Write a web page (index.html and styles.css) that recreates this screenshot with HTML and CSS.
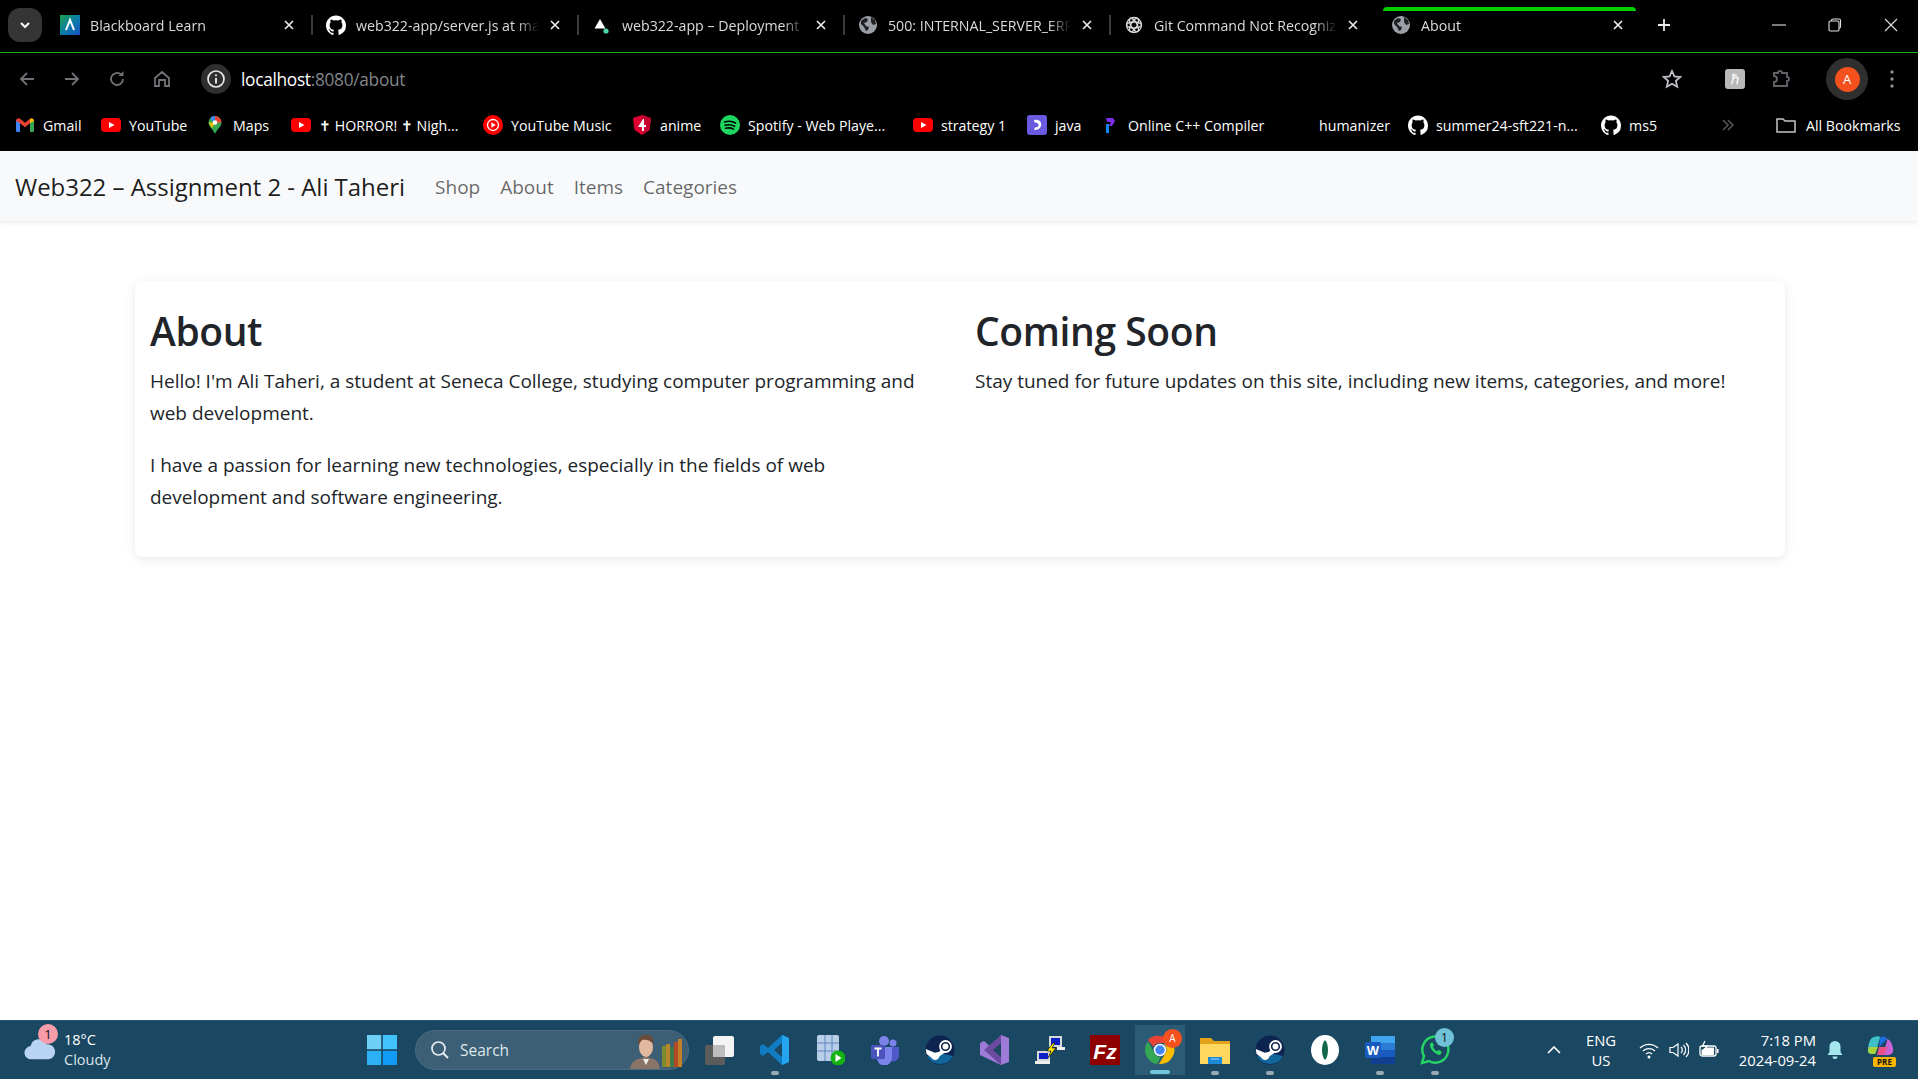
FILE: index.html
```html
<!DOCTYPE html>
<html lang="en">
<head>
<meta charset="utf-8">
<title>About</title>
<link rel="stylesheet" href="styles.css">
</head>
<body>
<svg class="defs" width="0" height="0">
  <symbol id="gh" viewBox="0 0 24 24"><path fill="#fff" d="M12 .5C5.37.5 0 5.87 0 12.5c0 5.3 3.44 9.8 8.2 11.39.6.11.82-.26.82-.58v-2.03c-3.34.73-4.04-1.61-4.04-1.61-.55-1.39-1.34-1.76-1.34-1.76-1.09-.75.08-.73.08-.73 1.2.08 1.84 1.24 1.84 1.24 1.07 1.83 2.81 1.3 3.5 1 .11-.78.42-1.3.76-1.6-2.67-.3-5.47-1.33-5.47-5.93 0-1.31.47-2.38 1.24-3.22-.13-.3-.54-1.52.12-3.18 0 0 1.01-.32 3.3 1.23a11.5 11.5 0 0 1 6 0c2.29-1.55 3.3-1.23 3.3-1.23.66 1.66.25 2.88.12 3.18.77.84 1.24 1.91 1.24 3.22 0 4.61-2.81 5.62-5.48 5.92.43.37.81 1.1.81 2.22v3.29c0 .32.22.69.83.58A12 12 0 0 0 24 12.5C24 5.87 18.63.5 12 .5z"/></symbol>
  <symbol id="yt" viewBox="0 0 20 20"><rect x="0" y="3" width="20" height="14" rx="4" fill="#f00"/><path d="M8 7l5.5 3L8 13z" fill="#fff"/></symbol>
  <symbol id="globe" viewBox="0 0 20 20"><circle cx="10" cy="10" r="9" fill="#9aa0a6"/><path d="M3 6l4-3 3 1-1 3-3 1 2 3 3 1-1 3-2 1-2-4-3-3zM13 2l4 3 1 4-3 1-2-3z" fill="#202124"/></symbol>
  <symbol id="x" viewBox="0 0 12 12"><path d="M2 2l8 8M10 2l-8 8" stroke="#e8eaed" stroke-width="1.7" fill="none"/></symbol>
  <symbol id="steam" viewBox="0 0 30 30">
    <circle cx="15" cy="15" r="14.500" fill="#0d2350"/>
    <path d="M2 21a14.500 14.500 0 0 0 26 0L15 18z" fill="#11679b"/>
    <path d="M.8 14l9 3.800 4.500-1 3-4.500 3 5-5.800 4a4.500 4.500 0 0 1-8.500 1L1.500 19z" fill="#fff"/>
    <circle cx="20.500" cy="11.500" r="5.500" fill="#0d2350" stroke="#fff" stroke-width="1.800"/>
    <circle cx="20.500" cy="11.500" r="3" fill="#fff"/>
  </symbol>
</svg>

<header class="chrome">
  <div class="tabstrip">
    <button class="tab-search"><svg width="12" height="12" viewBox="0 0 12 12"><path d="M2 4l4 4 4-4" fill="none" stroke="#fff" stroke-width="2"/></svg></button>
    <div class="tab">
      <svg class="fav" viewBox="0 0 20 20"><defs><linearGradient id="bb" x1="0" y1="0" x2="1" y2="1"><stop offset="0" stop-color="#1fa045"/><stop offset=".5" stop-color="#0a7ea8"/><stop offset="1" stop-color="#1a4fc4"/></linearGradient></defs><rect width="20" height="20" fill="url(#bb)"/><path d="M6 15l4-10 4 10" fill="none" stroke="#fff" stroke-width="2"/></svg>
      <span class="tab-title">Blackboard Learn</span>
      <svg class="close"><use href="#x"/></svg>
    </div>
    <div class="tab">
      <svg class="fav"><use href="#gh"/></svg>
      <span class="tab-title">web322-app/server.js at main</span>
      <svg class="close"><use href="#x"/></svg>
    </div>
    <div class="tab">
      <svg class="fav" viewBox="0 0 20 20"><path d="M8 4l5.500 9.500H2.500z" fill="#fff"/><circle cx="14" cy="16" r="2.600" fill="#4fd6a8"/></svg>
      <span class="tab-title">web322-app – Deployment</span>
      <svg class="close"><use href="#x"/></svg>
    </div>
    <div class="tab">
      <svg class="fav"><use href="#globe"/></svg>
      <span class="tab-title">500: INTERNAL_SERVER_ERROR</span>
      <svg class="close"><use href="#x"/></svg>
    </div>
    <div class="tab">
      <svg class="fav" viewBox="0 0 20 20"><g fill="none" stroke="#d8d8d8" stroke-width="1.300"><circle cx="10" cy="10" r="7.500"/><ellipse cx="10" cy="10" rx="7.500" ry="3"/><ellipse cx="10" cy="10" rx="7.500" ry="3" transform="rotate(60 10 10)"/><ellipse cx="10" cy="10" rx="7.500" ry="3" transform="rotate(120 10 10)"/></g></svg>
      <span class="tab-title">Git Command Not Recognized</span>
      <svg class="close"><use href="#x"/></svg>
    </div>
    <div class="tab tab-active">
      <svg class="fav"><use href="#globe"/></svg>
      <span class="tab-title">About</span>
      <svg class="close"><use href="#x"/></svg>
    </div>
    <svg class="newtab" viewBox="0 0 14 14"><path d="M7 1v12M1 7h12" stroke="#e8eaed" stroke-width="1.800"/></svg>
    <div class="winctl">
      <svg viewBox="0 0 14 14"><path d="M0 7h14" stroke="#e0e0e0" stroke-width="1.100"/></svg>
      <svg viewBox="0 0 14 14"><rect x="1" y="3" width="10" height="10" rx="1.500" fill="none" stroke="#e0e0e0" stroke-width="1.100"/><path d="M3.500 3V2.500a1.500 1.500 0 0 1 1.500-1.500h6a1.500 1.500 0 0 1 1.500 1.500v6a1.500 1.500 0 0 1-1.500 1.500" fill="none" stroke="#e0e0e0" stroke-width="1.100"/></svg>
      <svg viewBox="0 0 14 14"><path d="M1 1l12 12M13 1L1 13" stroke="#e0e0e0" stroke-width="1.100"/></svg>
    </div>
  </div>

  <div class="toolbar">
    <svg class="tool" viewBox="0 0 20 20"><path d="M17 10H4M10 4l-6 6 6 6" fill="none" stroke="#6f7276" stroke-width="1.800"/></svg>
    <svg class="tool" viewBox="0 0 20 20"><path d="M3 10h13M10 4l6 6-6 6" fill="none" stroke="#6f7276" stroke-width="1.800"/></svg>
    <svg class="tool" viewBox="0 0 20 20"><path d="M16 10a6 6 0 1 1-2-4.500" fill="none" stroke="#6f7276" stroke-width="1.800"/><path d="M16.500 2v5h-5z" fill="#6f7276"/></svg>
    <svg class="tool" viewBox="0 0 20 20"><path d="M3 9l7-6 7 6v8h-4v-6H7v6H3z" fill="none" stroke="#6f7276" stroke-width="1.800"/></svg>
    <span class="site-info"><svg viewBox="0 0 20 20" width="20" height="20"><circle cx="10" cy="10" r="8" fill="none" stroke="#e8eaed" stroke-width="1.700"/><path d="M10 9v5.500M10 5.500v1.800" stroke="#e8eaed" stroke-width="1.900"/></svg></span>
    <span class="url">localhost<span class="url-dim">:8080/about</span></span>
    <svg class="star" viewBox="0 0 20 20"><path d="M10 2l2.400 5.400 5.900.6-4.400 3.900 1.300 5.800L10 14.700l-5.200 3 1.300-5.800L1.700 8l5.900-.6z" fill="none" stroke="#bdc1c6" stroke-width="1.800"/></svg>
    <span class="ext-h">ℏ</span>
    <svg class="puzzle" viewBox="0 0 20 20"><path d="M3 4h4a2 2 0 0 1 4 0h5v4a2 2 0 0 1 0 4v5H3v-4a2 2 0 0 0 0-6z" fill="none" stroke="#5f6368" stroke-width="1.900"/></svg>
    <span class="avatar-ring"><span class="avatar">A</span></span>
    <svg class="kebab" viewBox="0 0 4 18"><circle cx="2" cy="2" r="1.700" fill="#8a8d91"/><circle cx="2" cy="9" r="1.700" fill="#8a8d91"/><circle cx="2" cy="16" r="1.700" fill="#8a8d91"/></svg>
  </div>

  <nav class="bookmarks">
    <a class="bm"><svg class="bm-ico" viewBox="0 0 20 20"><path d="M1 6h4v11H2.500A1.500 1.500 0 0 1 1 15.500z" fill="#4285f4"/><path d="M15 6h4v9.500a1.500 1.500 0 0 1-1.500 1.500H15z" fill="#34a853"/><path d="M1 6c0-2.500 2.500-3.500 4-2.300l5 4 5-4v4.500l-5 4-5-4-4-2.500z" fill="#ea4335"/><path d="M15 3.700c1.500-1.200 4-.2 4 2.300l-4 2.200z" fill="#fbbc04"/></svg>Gmail</a>
    <a class="bm"><svg class="bm-ico"><use href="#yt"/></svg>YouTube</a>
    <a class="bm"><svg class="bm-ico" viewBox="0 0 20 20"><path d="M10 1a6.500 6.500 0 0 1 6.500 6.500C16.500 12 12 14 10 19 8 14 3.500 12 3.500 7.500A6.500 6.500 0 0 1 10 1z" fill="#34a853"/><path d="M10 1a6.500 6.500 0 0 0-5 2.300L10 8z" fill="#4285f4"/><path d="M10 1a6.500 6.500 0 0 1 6.500 6.500L10 8z" fill="#ea4335"/><path d="M3.500 7.500L10 8l-3 5z" fill="#fbbc04"/><circle cx="10" cy="7.500" r="2.300" fill="#fff"/></svg>Maps</a>
    <a class="bm"><svg class="bm-ico"><use href="#yt"/></svg>✝ HORROR! ✝ Nigh...</a>
    <a class="bm"><svg class="bm-ico" viewBox="0 0 20 20"><circle cx="10" cy="10" r="10" fill="#f00"/><circle cx="10" cy="10" r="5.500" fill="none" stroke="#fff" stroke-width="1.300"/><path d="M8.300 7.300l4.500 2.700-4.500 2.700z" fill="#fff"/></svg>YouTube Music</a>
    <a class="bm"><svg class="bm-ico" viewBox="0 0 20 20"><path d="M10 0l9 3-1.500 12L10 20l-7.500-5L1 3z" fill="#dd0031"/><path d="M10 0l9 3-1.500 12L10 20z" fill="#c3002f"/><path d="M11 4L6 12h4v4h2v-4h2v-2h-2V4z" fill="#fff"/></svg>anime</a>
    <a class="bm"><svg class="bm-ico" viewBox="0 0 20 20"><circle cx="10" cy="10" r="10" fill="#1ed760"/><path d="M4.500 7c4-1.200 8-.8 11 1M5 10.300c3.400-1 6.800-.6 9.600 1M5.500 13.300c2.800-.7 5.600-.5 8 .8" fill="none" stroke="#000" stroke-width="1.600" stroke-linecap="round"/></svg>Spotify - Web Playe...</a>
    <a class="bm"><svg class="bm-ico"><use href="#yt"/></svg>strategy 1</a>
    <a class="bm"><svg class="bm-ico" viewBox="0 0 20 20"><rect width="20" height="20" rx="3" fill="#6a5ae0"/><path d="M7 5c6-1 8 3 7 6-1 3-4 4-7 4l1-2.500c3 0 4-1.500 3.500-3C11 8 9.500 7.500 7.500 7.500z" fill="#fff"/></svg>java</a>
    <a class="bm"><svg class="bm-ico" viewBox="0 0 20 20"><path d="M6 3h7l2 3-3 5H9l2-4H7z" fill="#7c2ef2"/><path d="M6 9h3v9H6z" fill="#1188ee"/></svg>Online C++ Compiler</a>
    <a class="bm">humanizer</a>
    <a class="bm"><svg class="bm-ico"><use href="#gh"/></svg>summer24-sft221-n...</a>
    <a class="bm"><svg class="bm-ico"><use href="#gh"/></svg>ms5</a>
    <svg class="bm-more" viewBox="0 0 14 12"><path d="M2 1l5 5-5 5M7 1l5 5-5 5" fill="none" stroke="#55585c" stroke-width="1.500"/></svg>
    <a class="bm bm-all"><svg class="bm-ico" viewBox="0 0 20 20"><path d="M1 4h6l2 2h10v11H1z" fill="none" stroke="#c4c7c5" stroke-width="1.500"/></svg>All Bookmarks</a>
  </nav>
</header>

<div class="navbar">
  <a class="brand">Web322 – Assignment 2 - Ali Taheri</a>
  <ul class="navlist">
    <li>Shop</li>
    <li>About</li>
    <li>Items</li>
    <li>Categories</li>
  </ul>
</div>

<main class="page">
  <section class="card">
    <div class="col">
      <h2>About</h2>
      <p>Hello! I'm Ali Taheri, a student at Seneca College, studying computer programming and web development.</p>
      <p>I have a passion for learning new technologies, especially in the fields of web development and software engineering.</p>
    </div>
    <div class="col">
      <h2>Coming Soon</h2>
      <p>Stay tuned for future updates on this site, including new items, categories, and more!</p>
    </div>
  </section>
</main>

<footer class="taskbar">
  <div class="weather">
    <svg class="cloud" viewBox="0 0 34 28"><path d="M8 26a7 7 0 0 1-1-14 9 9 0 0 1 17-2 7.500 7.500 0 0 1 2 16z" fill="#b9d4f3"/></svg>
    <span class="badge-red">1</span>
    <div class="weather-text"><span>18°C</span><span class="dim">Cloudy</span></div>
  </div>
  <div class="center">
    <svg class="start" viewBox="0 0 30 30"><rect width="14.200" height="14.200" fill="#6fd0f7"/><rect x="15.800" width="14.200" height="14.200" fill="#41c4fb"/><rect y="15.800" width="14.200" height="14.200" fill="#2cb2f4"/><rect x="15.800" y="15.800" width="14.200" height="14.200" fill="#129bf6"/></svg>
    <div class="search">
      <svg viewBox="0 0 20 20" width="20" height="20"><circle cx="8.500" cy="8.500" r="6.500" fill="none" stroke="#e6edf2" stroke-width="1.700"/><path d="M13 13l5 5" stroke="#e6edf2" stroke-width="1.900"/></svg>
      <span>Search</span>
      <svg class="search-art" viewBox="0 0 56 36"><path d="M2 36c1-8 7-10 12-11l4-3 4 3c5 1 9 3 10 11z" fill="#8a7468"/><path d="M15 26l3 6 3-6z" fill="#eee"/><ellipse cx="18" cy="14" rx="7" ry="10" fill="#e2b8a0"/><path d="M10 12c-1-8 5-11 10-10 5 0 6 5 5 9-2-4-8-5-11-4z" fill="#6b4a3a"/><rect x="34" y="13" width="4" height="21" fill="#7b8b2e"/><rect x="38" y="11" width="4" height="23" fill="#b9872b"/><rect x="42" y="14" width="4" height="20" fill="#3f7a4a"/><rect x="46" y="9" width="4" height="25" fill="#b24a23"/><rect x="50" y="6" width="4" height="28" fill="#c27f28"/></svg>
    </div>
    <div class="apps">
      <span class="app"><svg viewBox="0 0 30 30"><rect x="0" y="10" width="20" height="20" rx="2" fill="#5c5c5c"/><rect x="8" y="1" width="21" height="21" rx="2" fill="#f4f4f4"/><rect x="8" y="10" width="12" height="12" fill="#bdbdbd"/></svg></span>
      <span class="app app-on"><svg viewBox="0 0 30 30"><path d="M22 0l7 3v24l-7 3L8 17l-5 4-3-2V11l3-2 5 4z" fill="#0f7cc4"/><path d="M22 0l7 3v24l-7 3z" fill="#25a5ef"/><path d="M22 8l-8 7 8 7z" fill="#1a4761"/></svg></span>
      <span class="app"><svg viewBox="0 0 30 30"><rect x="2" y="0" width="22" height="26" rx="2" fill="#b7cde8"/><path d="M2 8h22M2 16h22M10 0v26M17 0v26" stroke="#5e88bd" stroke-width="1"/><circle cx="23" cy="23" r="7.500" fill="#12b312"/><path d="M20.500 19l6 4-6 4z" fill="#fff"/></svg></span>
      <span class="app"><svg viewBox="0 0 30 30"><circle cx="23" cy="8" r="3.500" fill="#7b83eb"/><circle cx="14" cy="6" r="5" fill="#7b83eb"/><path d="M17 12h12v9a6 6 0 0 1-8 5z" fill="#5059c9"/><path d="M7 12h15v11a7.500 7.500 0 0 1-15 0z" fill="#7b83eb"/><rect x="1" y="10" width="14" height="14" rx="1.500" fill="#4b53bc"/><path d="M4.500 13.500h7M8 13.500v8" stroke="#fff" stroke-width="1.800"/></svg></span>
      <span class="app"><svg><use href="#steam"/></svg></span>
      <span class="app"><svg viewBox="0 0 30 30"><path d="M21 0l8 3v24l-8 3L0 20V8l4-2 8 7z" fill="#9f7bd8"/><path d="M21 0L4 15l17 15z" fill="#6b4aa0"/><path d="M21 8l-8 7 8 7z" fill="#1a4761"/></svg></span>
      <span class="app"><svg viewBox="0 0 30 30"><rect x="14" y="1" width="13" height="11" fill="#d8d8d8"/><rect x="16" y="3" width="9" height="7" fill="#0c20c8"/><rect x="22" y="12" width="8" height="3" fill="#eee"/><rect x="2" y="16" width="13" height="10" fill="#d8d8d8"/><rect x="4" y="18" width="9" height="6" fill="#0c20c8"/><rect x="0" y="26" width="15" height="3" fill="#eee"/><path d="M18 8l-6 8h4l-3 7 8-10h-4l3-5z" fill="#ffe600" stroke="#000" stroke-width=".6"/></svg></span>
      <span class="app"><svg viewBox="0 0 30 30"><rect width="30" height="30" fill="#8e0000"/><text x="15" y="24" class="fz">Fz</text></svg></span>
      <span class="app app-active">
        <svg viewBox="0 0 30 30"><path d="M15 1a14 14 0 0 1 12 7H15a7 7 0 0 0-6.500 4L3 5a14 14 0 0 1 12-4z" fill="#ea4335"/><path d="M3 6.500L9 17a7 7 0 0 0 7 5l-4 7A14 14 0 0 1 3 6.500z" fill="#34a853"/><path d="M28 9a14 14 0 0 1-14 20l6-10a7 7 0 0 0-1-10z" fill="#fbbc04"/><circle cx="15" cy="15" r="5.500" fill="#4285f4" stroke="#fff" stroke-width="1.500"/></svg>
        <span class="app-badge">A</span>
      </span>
      <span class="app app-on"><svg viewBox="0 0 30 30"><path d="M0 3h11l3 3h16v23H0z" fill="#e3a21a"/><path d="M0 9h30v20H0z" fill="#ffd75e"/><path d="M8 22h14v7H8z" fill="#1e88d9"/><path d="M11 24h8" stroke="#9fd6ff" stroke-width="1"/></svg></span>
      <span class="app app-on"><svg><use href="#steam"/></svg></span>
      <span class="app"><svg viewBox="0 0 30 30"><ellipse cx="15" cy="15" rx="14" ry="15" fill="#fff"/><path d="M15 5c-4 4-4 16 0 20 4-4 4-16 0-20z" fill="#13684b"/></svg></span>
      <span class="app app-on"><svg viewBox="0 0 30 30"><rect x="6" y="1" width="24" height="7" fill="#41a5ee"/><rect x="6" y="8" width="24" height="7" fill="#2b7cd3"/><rect x="6" y="15" width="24" height="7" fill="#185abd"/><rect x="6" y="22" width="24" height="7" fill="#103f91"/><rect x="0" y="7" width="16" height="16" rx="1.500" fill="#185abd"/><text x="8" y="20" class="wd">W</text></svg></span>
      <span class="app app-on"><svg viewBox="0 0 30 30"><path d="M2 28l2-7a13 13 0 1 1 5 5z" fill="none" stroke="#25d366" stroke-width="2.500"/><path d="M10 9c-1 4 5 11 10 11l2-3-3-2-2 1c-1 0-3-2-4-4l1-2-2-3z" fill="#25d366"/></svg><span class="app-count">1</span></span>
    </div>
  </div>
  <div class="tray">
    <svg class="caret" viewBox="0 0 14 8"><path d="M1 7l6-6 6 6" fill="none" stroke="#fff" stroke-width="1.600"/></svg>
    <div class="lang"><span>ENG</span><span>US</span></div>
    <svg class="tray-ico" viewBox="0 0 20 20"><path d="M1 8a13 13 0 0 1 18 0M4 11a9 9 0 0 1 12 0M7 14a4.500 4.500 0 0 1 6 0" fill="none" stroke="#fff" stroke-width="1.300"/><circle cx="10" cy="17" r="1.500" fill="#fff"/></svg>
    <svg class="tray-ico" viewBox="0 0 20 20"><path d="M1 7.500h3L9 4v12l-5-3.500H1z" fill="none" stroke="#fff" stroke-width="1.200"/><path d="M12 7a4 4 0 0 1 0 6M14.500 5a7 7 0 0 1 0 10M17 3a10 10 0 0 1 0 14" fill="none" stroke="#fff" stroke-width="1.200"/></svg>
    <svg class="tray-ico" viewBox="0 0 20 20"><rect x="1" y="6" width="16" height="10" rx="2" fill="none" stroke="#fff" stroke-width="1.300"/><path d="M2.500 15V10l4-2.500H15V15z" fill="#fff"/><rect x="18" y="9" width="1.500" height="4" fill="#fff"/><path d="M6 1L3.500 6H8L6 9" fill="none" stroke="#fff" stroke-width="1.200"/></svg>
    <div class="clock"><span>7:18 PM</span><span>2024-09-24</span></div>
    <svg class="bell" viewBox="0 0 16 18"><path d="M8 0a5.500 5.500 0 0 1 5.500 5.500V11l2 3H.5l2-3V5.500A5.500 5.500 0 0 1 8 0z" fill="#a6e6ee"/><path d="M5.500 15.500h5a2.500 2.500 0 0 1-5 0z" fill="#a6e6ee"/></svg>
    <span class="copilot">
      <svg viewBox="0 0 28 24" width="28" height="24"><path d="M8 2c-4 1-5 5-6 12-1 4 2 5 4 5h3L14 3c1-2-4-2-6-1z" fill="#3fc0c8"/><path d="M14 3c1-2 6-2 7 1l-8 8z" fill="#1d6fe0"/><path d="M21 4c4 1 5 5 6 9 1 5-2 7-5 7h-5l4-14z" fill="#c864d8"/><path d="M3 12c-2 4-1 7 3 7h3l3-7z" fill="#a8d438"/><path d="M13 12h9l-4 8h-7z" fill="#e8508c"/></svg>
      <span class="pre">PRE</span>
    </span>
  </div>
</footer>
</body>
</html>
```

FILE: styles.css
```css
* { box-sizing: border-box; }
html, body { height: 100%; }
body {
  margin: 0;
  height: 1079px;
  overflow: hidden;
  display: flex;
  flex-direction: column;
  background: #fff;
  font-family: "Open Sans", "Noto Sans", sans-serif;
  color: #212529;
}
.defs { position: absolute; }
svg { display: block; flex: none; }

/* Browser chrome */
.chrome { background: #000; color: #fff; flex: none; }
.tabstrip {
  height: 53px;
  display: flex;
  align-items: center;
  border-bottom: 1px solid #17b017;
  padding-left: 8px;
  position: relative;
}
.tab-search {
  width: 34px; height: 34px;
  margin: 0 3px 2px 0;
  flex: none;
  border: 0; border-radius: 12px;
  background: #353535;
  display: flex; align-items: center; justify-content: center;
}
.tab {
  width: 266px;
  height: 52px;
  flex: none;
  display: flex;
  align-items: center;
  padding: 0 16px 2px 15px;
  gap: 10px;
  position: relative;
}
.tab + .tab::before {
  content: "";
  position: absolute;
  left: 0; top: 15px;
  width: 2px; height: 20px;
  background: #3a3a3a;
}
.tab-active::before { display: none; }
.tab-active {
  width: 261px;
  padding-left: 16px;
  padding-right: 12px;
}
.tab-active::after {
  content: "";
  position: absolute;
  left: 8px; right: 0; top: 7px;
  height: 4px;
  background: #00d000;
  border-radius: 7px 7px 0 0;
}
.fav { width: 20px; height: 20px; flex: none; }
.tab-title {
  flex: 1;
  min-width: 0;
  white-space: nowrap;
  overflow: hidden;
  font-size: 14.200px;
  color: #d8dadc;
  -webkit-mask-image: linear-gradient(to right, #000 88%, transparent);
  mask-image: linear-gradient(to right, #000 88%, transparent);
}
.close { width: 12px; height: 12px; flex: none; }
.newtab { width: 14px; height: 14px; margin: 0 0 2px 21px; }
.winctl {
  margin: 0 20px 2px auto;
  display: flex;
  gap: 42px;
}
.winctl svg { width: 14px; height: 14px; }

.toolbar {
  height: 52px;
  display: flex;
  align-items: center;
  padding: 0 0 0 17px;
}
.tool { width: 20px; height: 20px; margin-right: 25px; }
.tool:nth-child(4) { margin-right: 27px; }
.site-info {
  width: 30px; height: 30px;
  border-radius: 50%;
  background: #2f2f2f;
  display: flex; align-items: center; justify-content: center;
  flex: none;
  margin-left: 2px;
}
.url { margin-left: 10px; font-size: 17.300px; letter-spacing: -.3px; color: #fff; }
.url-dim { color: #80868b; }
.star { width: 20px; height: 20px; margin-left: auto; }
.ext-h {
  width: 20px; height: 20px;
  margin-left: 43px;
  border-radius: 3px;
  background: #b9b9b9;
  color: #fff;
  font-size: 14px;
  line-height: 20px;
  text-align: center;
}
.puzzle { width: 20px; height: 20px; margin-left: 26px; }
.avatar-ring {
  width: 42px; height: 42px;
  margin-left: 35px;
  border-radius: 50%;
  background: #2f2f2f;
  display: flex; align-items: center; justify-content: center;
}
.avatar {
  width: 25px; height: 25px;
  border-radius: 50%;
  background: #f4511e;
  color: #fff;
  font-size: 13px;
  line-height: 25px;
  text-align: center;
}
.kebab { width: 4px; height: 18px; margin: 0 24px 0 22px; }

.bookmarks {
  height: 46px;
  display: grid;
  grid-template-columns: 86px 104px 86px 192px 149px 88px 193px 114px 73px 219px 89px 193px 120px 55px 1fr;
  align-items: center;
  padding: 0 16px 6px 15px;
  font-size: 14.200px;
  color: #fff;
}
.bm { display: flex; align-items: center; gap: 8px; white-space: nowrap; }
.bm-ico { width: 20px; height: 20px; flex: none; }
.bm-more { width: 14px; height: 12px; }
.bm-all { justify-self: start; gap: 10px; }

/* Site navbar */
.navbar {
  height: 70px;
  flex: none;
  background: #f8f9fa;
  box-shadow: 0 2px 4px rgba(0, 0, 0, .075);
  display: flex;
  align-items: center;
  padding: 0 15px;
  position: relative;
}
.brand { font-size: 24px; color: rgba(0, 0, 0, .9); letter-spacing: -.03px; margin-right: 20px; }
.navlist {
  list-style: none;
  margin: 0; padding: 1px 0 0;
  display: flex;
  font-size: 19px;
  color: rgba(0, 0, 0, .6);
}
.navlist li { padding: 0 10px; }

/* Page */
.page { flex: 1; padding-top: 60px; }
.card {
  width: 1650px;
  height: 276px;
  margin: 0 0 0 135px;
  background: #fff;
  border-radius: 8px;
  box-shadow: 0 2px 12px rgba(0, 0, 0, .09);
  display: flex;
}
.col { width: 825px; padding: 26px 15px 0; }
h2 { margin: 0 0 10px; font-size: 39px; line-height: 48px; font-weight: 600; letter-spacing: -.4px; }
p { margin: 0 0 20px; font-size: 19px; line-height: 32px; letter-spacing: -.01px; color: #212529; }

/* Windows taskbar */
.taskbar {
  height: 59px;
  flex: none;
  background: #1a4761;
  border-top: 1px solid #2c5771;
  color: #fff;
  display: flex;
  align-items: center;
  position: relative;
}
.weather { width: 382px; display: flex; align-items: center; padding-left: 24px; position: relative; flex: none; }
.cloud { width: 32px; height: 28px; margin-top: -4px; }
.badge-red {
  position: absolute;
  left: 38px; top: -6px;
  width: 20px; height: 20px;
  border-radius: 50%;
  background: #f79ca8;
  color: #111;
  font-size: 13px;
  line-height: 20px;
  text-align: center;
}
.weather-text { display: flex; flex-direction: column; margin-left: 8px; font-size: 14.500px; line-height: 20px; }
.dim { color: #dbe5ea; }
.center { display: flex; align-items: center; flex: none; margin-left: -15px; }
.start { width: 30px; height: 30px; }
.search {
  width: 274px; height: 40px;
  margin-left: 18px;
  border-radius: 20px;
  background: #3c5f75;
  border: 1px solid #4a6b80;
  display: flex;
  align-items: center;
  padding-left: 14px;
  gap: 10px;
  font-size: 15.500px;
  color: #dfe7ec;
  position: relative;
}
.search-art { position: absolute; right: 4px; bottom: 0; width: 56px; height: 36px; }
.apps { display: flex; margin-left: 3px; }
.app {
  width: 55px; height: 50px;
  display: flex; align-items: center; justify-content: center;
  position: relative;
}
.app svg { width: 30px; height: 30px; }
.app-on::after {
  content: "";
  position: absolute;
  bottom: 0; left: 50%;
  width: 8px; height: 4px;
  margin-left: -4px;
  border-radius: 2px;
  background: #9aa9b3;
}
.app-active { background: linear-gradient(#2c5b75, #2c5b75) center / 50px 50px no-repeat; }
.app-active::after {
  content: "";
  position: absolute;
  bottom: 1px; left: 50%;
  width: 20px; height: 4px;
  margin-left: -10px;
  border-radius: 2px;
  background: #70c6dc;
}
.app-badge {
  position: absolute;
  right: 5px; top: 4px;
  width: 19px; height: 19px;
  border-radius: 50%;
  background: #f4511e;
  color: #fff;
  font-size: 10px;
  line-height: 19px;
  text-align: center;
}
.app-count {
  position: absolute;
  right: 8px; top: 3px;
  width: 19px; height: 19px;
  border-radius: 50%;
  background: #6fc2d8;
  color: #111;
  font-size: 12px;
  line-height: 19px;
  text-align: center;
}
.fz { font: italic 700 21px "Liberation Sans", sans-serif; fill: #fff; text-anchor: middle; }
.wd { font: 700 13px "Liberation Sans", sans-serif; fill: #fff; text-anchor: middle; }
.tray { margin-left: auto; display: flex; align-items: center; padding-right: 24px; }
.caret { width: 14px; height: 8px; }
.lang { display: flex; flex-direction: column; align-items: center; width: 34px; margin-left: 23px; font-size: 14.800px; line-height: 20px; }
.tray-ico { width: 20px; height: 20px; margin-left: 10px; }
.lang + .tray-ico { margin-left: 21px; }
.clock { display: flex; flex-direction: column; align-items: flex-end; width: 80px; margin-left: 17px; font-size: 14.800px; line-height: 20px; white-space: nowrap; }
.bell { width: 16px; height: 18px; margin-left: 11px; }
.copilot { position: relative; width: 28px; height: 30px; margin-left: 23px; }
.pre {
  position: absolute;
  left: 7px; bottom: -2px;
  width: 23px; height: 10px;
  border-radius: 2px;
  background: #f7b500;
  color: #111;
  font-size: 8px;
  font-weight: 700;
  line-height: 10px;
  text-align: center;
}
```
